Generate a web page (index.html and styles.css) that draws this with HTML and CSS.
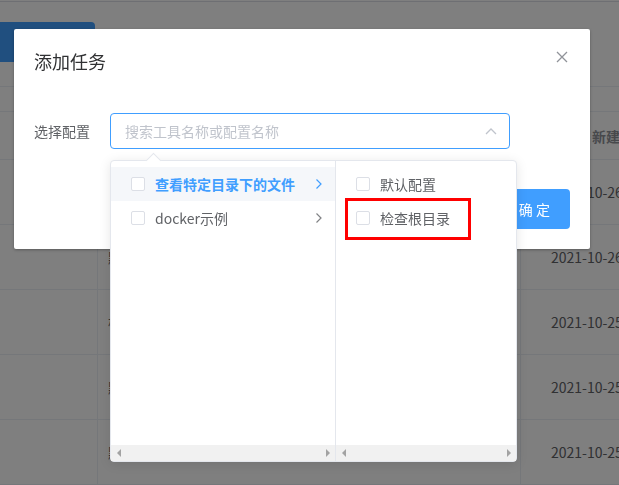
FILE: index.html
```html
<!DOCTYPE html>
<html lang="zh">
<head>
<meta charset="utf-8">
<title>添加任务</title>
<link rel="stylesheet" href="styles.css">
</head>
<body>
<div class="page">
  <div class="topbar"></div>
  <div class="toolbar"><button class="btn-new" aria-label="新建任务"></button></div>
  <div class="table">
    <div class="tr th"><div class="td c1"></div><div class="td c2"></div><div class="td c3">新建时间</div></div>
    <div class="tr"><div class="td c1"></div><div class="td c2"></div><div class="td c3">2021-10-26 10:21:33</div></div>
    <div class="tr"><div class="td c1"></div><div class="td c2">默认配置任务</div><div class="td c3">2021-10-26 10:18:02</div></div>
    <div class="tr"><div class="td c1"></div><div class="td c2">检查根目录</div><div class="td c3">2021-10-25 17:40:11</div></div>
    <div class="tr"><div class="td c1"></div><div class="td c2">默认配置</div><div class="td c3">2021-10-25 16:02:45</div></div>
    <div class="tr"><div class="td c1"></div><div class="td c2">默认配置</div><div class="td c3">2021-10-25 15:30:20</div></div>
  </div>
</div>

<div class="mask"></div>

<div class="dialog">
  <div class="dialog-header">
    <span class="dialog-title">添加任务</span>
    <button class="dialog-close" aria-label="关闭">
      <svg width="16" height="16" viewBox="0 0 16 16"><path d="M3 3 L13 13 M13 3 L3 13" stroke="#909399" stroke-width="1.3" fill="none"/></svg>
    </button>
  </div>
  <div class="dialog-body">
    <div class="form-item">
      <label class="form-label">选择配置</label>
      <div class="cascader-input">
        <span class="placeholder">搜索工具名称或配置名称</span>
        <svg class="suffix" width="12" height="8" viewBox="0 0 12 8"><path d="M1 7 L6 2 L11 7" stroke="#c0c4cc" stroke-width="1.3" fill="none"/></svg>
      </div>
    </div>
  </div>
  <div class="dialog-footer">
    <button class="btn-confirm">确 定</button>
  </div>
</div>

<div class="cascader-dropdown">
  <span class="popper-arrow"></span>
  <div class="menu menu-first">
    <div class="menu-list">
      <div class="node active"><span class="checkbox"></span><span class="node-label">查看特定目录下的文件</span><svg class="node-arrow" width="8" height="12" viewBox="0 0 8 12"><path d="M1.5 1.5 L6 6 L1.5 10.5" stroke="#409eff" stroke-width="1.2" fill="none"/></svg></div>
      <div class="node"><span class="checkbox"></span><span class="node-label">docker示例</span><svg class="node-arrow" width="8" height="12" viewBox="0 0 8 12"><path d="M1.5 1.5 L6 6 L1.5 10.5" stroke="#808285" stroke-width="1.2" fill="none"/></svg></div>
    </div>
    <div class="hscroll"><span class="sb-btn"><span class="tri-left"></span></span><span class="sb-btn"><span class="tri-right"></span></span></div>
  </div>
  <div class="menu menu-second">
    <div class="menu-list">
      <div class="node"><span class="checkbox"></span><span class="node-label">默认配置</span></div>
      <div class="node"><span class="checkbox"></span><span class="node-label">检查根目录</span></div>
    </div>
    <div class="hscroll"><span class="sb-btn"><span class="tri-left"></span></span><span class="sb-btn"><span class="tri-right"></span></span></div>
  </div>
</div>

<div class="highlight"></div>
</body>
</html>
```
FILE: styles.css
```css
html, body {
  margin: 0;
  padding: 0;
  width: 619px;
  height: 485px;
  overflow: hidden;
  background: #fff;
  font-family: "Noto Sans CJK SC", "Noto Sans", sans-serif;
}

button { font-family: inherit; }

/* ---------- background page ---------- */
.page {
  width: 619px;
  overflow: hidden;
}
.topbar {
  height: 1px;
  border-bottom: 1px solid #dcdfe6;
}
.toolbar {
  height: 64px;
  padding-top: 20px;
  border-bottom: 1px solid #ebeef5;
  margin-bottom: 24px;
}
.btn-new {
  display: block;
  margin-left: -5px;
  width: 100px;
  height: 40px;
  border: none;
  border-radius: 4px;
  background: #409eff;
  color: #fff;
  font-size: 14px;
}
.table {
  border-top: 1px solid #ebeef5;
  font-size: 14px;
  color: #606266;
}
.tr {
  display: flex;
  height: 65px;
  box-sizing: border-box;
  border-bottom: 1px solid #ebeef5;
}
.tr.th {
  height: 48px;
  color: #909399;
  font-weight: 700;
}
.td {
  display: flex;
  align-items: center;
  white-space: nowrap;
  box-sizing: border-box;
  overflow: hidden;
}
.c1 { flex: none; width: 98px; border-right: 1px solid #ebeef5; }
.c2 { flex: none; width: 423px; padding-left: 10px; border-right: 1px solid #ebeef5; }
.c3 { flex: 1 1 auto; min-width: 0; padding-left: 30px; }
.tr.th .c3 { padding-left: 71px; }

/* ---------- mask ---------- */
.mask {
  position: fixed;
  inset: 0;
  background: rgba(0, 0, 0, 0.5);
  z-index: 10;
}

/* ---------- dialog ---------- */
.dialog {
  position: absolute;
  left: 14px;
  top: 29px;
  width: 576px;
  background: #fff;
  border-radius: 2px;
  box-shadow: 0 1px 3px rgba(0, 0, 0, 0.3);
  z-index: 20;
}
.dialog-header {
  position: relative;
  padding: 20px 20px 10px;
}
.dialog-title {
  display: block;
  font-size: 18px;
  line-height: 24px;
  color: #303133;
}
.dialog-close {
  position: absolute;
  top: 20px;
  right: 20px;
  width: 16px;
  height: 16px;
  padding: 0;
  border: none;
  background: transparent;
  display: flex;
}
.dialog-body {
  padding: 30px 20px;
}
.form-item {
  display: flex;
  align-items: center;
}
.form-label {
  flex: none;
  width: 76px;
  font-size: 14px;
  line-height: 36px;
  color: #606266;
}
.cascader-input {
  position: relative;
  width: 400px;
  height: 36px;
  box-sizing: border-box;
  border: 1px solid #409eff;
  border-radius: 4px;
  padding: 0 30px 0 14px;
  display: flex;
  align-items: center;
}
.placeholder {
  font-size: 14px;
  color: #c0c4cc;
}
.suffix {
  position: absolute;
  right: 12px;
  top: 13px;
}
.dialog-footer {
  padding: 10px 20px 20px;
  display: flex;
  justify-content: flex-end;
}
.btn-confirm {
  height: 40px;
  padding: 0 20px;
  border: none;
  border-radius: 4px;
  background: #409eff;
  color: #fff;
  font-size: 14px;
}

/* ---------- cascader dropdown ---------- */
.cascader-dropdown {
  position: absolute;
  left: 110px;
  top: 160px;
  display: flex;
  background: #fff;
  border: 1px solid #e4e7ed;
  border-radius: 4px;
  box-shadow: 0 2px 12px rgba(0, 0, 0, 0.1);
  z-index: 30;
}
.popper-arrow {
  position: absolute;
  left: 37px;
  top: -6px;
  width: 10px;
  height: 10px;
  background: #fff;
  border-left: 1px solid #e4e7ed;
  border-top: 1px solid #e4e7ed;
  transform: rotate(45deg);
}
.menu {
  height: 300px;
  display: flex;
  flex-direction: column;
  position: relative;
}
.menu-first {
  width: 224px;
  border-right: 1px solid #e4e7ed;
}
.menu-second {
  width: 180px;
}
.menu-list {
  flex: 1;
  padding: 6px 0;
}
.node {
  position: relative;
  height: 34px;
  padding: 0 30px 0 20px;
  display: flex;
  align-items: center;
  font-size: 14px;
  color: #606266;
}
.node.active {
  background: #f5f7fa;
  color: #409eff;
  font-weight: 700;
}
.checkbox {
  width: 14px;
  height: 14px;
  box-sizing: border-box;
  border: 1px solid #dcdfe6;
  border-radius: 2px;
  background: #fff;
  margin-right: 10px;
  flex: none;
}
.node-label {
  white-space: nowrap;
}
.node-arrow {
  position: absolute;
  right: 12px;
  top: 11px;
}
.hscroll {
  height: 16px;
  background: #f1f1f1;
  display: flex;
  justify-content: space-between;
  align-items: center;
}
.sb-btn {
  width: 15px;
  height: 16px;
  display: flex;
  align-items: center;
  justify-content: center;
}
.tri-left {
  width: 0;
  height: 0;
  border-top: 4px solid transparent;
  border-bottom: 4px solid transparent;
  border-right: 4px solid #a3a3a3;
}
.tri-right {
  width: 0;
  height: 0;
  border-top: 4px solid transparent;
  border-bottom: 4px solid transparent;
  border-left: 4px solid #a3a3a3;
}

/* ---------- red annotation ---------- */
.highlight {
  position: absolute;
  left: 345px;
  top: 198px;
  width: 126px;
  height: 42px;
  box-sizing: border-box;
  border: 3px solid #ff0000;
  z-index: 40;
}
```
